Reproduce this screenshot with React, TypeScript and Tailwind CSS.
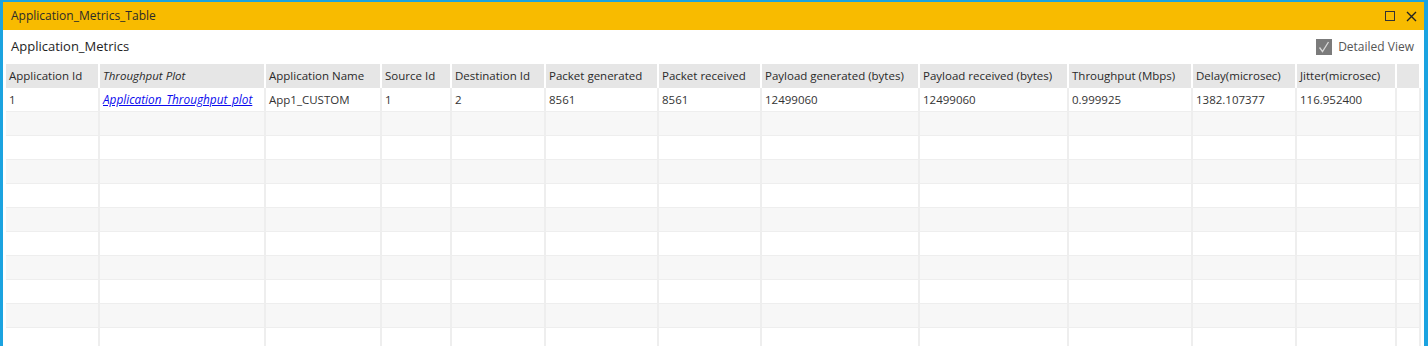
import React from 'react';

const COLS = [
  { label: 'Application Id', w: 94 },
  { label: 'Throughput Plot', w: 166, italic: true },
  { label: 'Application Name', w: 116 },
  { label: 'Source Id', w: 70 },
  { label: 'Destination Id', w: 94 },
  { label: 'Packet generated', w: 113 },
  { label: 'Packet received', w: 103 },
  { label: 'Payload generated (bytes)', w: 158 },
  { label: 'Payload received (bytes)', w: 149 },
  { label: 'Throughput (Mbps)', w: 124 },
  { label: 'Delay(microsec)', w: 104 },
  { label: 'Jitter(microsec)', w: 100 },
  { label: '', w: 24 },
];

const ROW = ['1', 'Application_Throughput_plot', 'App1_CUSTOM', '1', '2', '8561', '8561', '12499060', '12499060', '0.999925', '1382.107377', '116.952400', ''];

const EMPTY_ROWS = 10;

const App: React.FC = () => {
  return (
    <div
      className="w-[1428px] h-[346px] overflow-hidden bg-white border-l-[3px] border-r-[4px] border-t-[2px] border-[#1ba3e0] text-[#333]"
      style={{ fontFamily: '"Open Sans", "Noto Sans", sans-serif' }}
    >
      {/* Title bar */}
      <div className="h-[28px] bg-[#f8bb00] flex items-center justify-between pl-[8px] pr-[7px]">
        <span className="text-[12px] text-[#2b2b2b]">Application_Metrics_Table</span>
        <div className="flex items-center gap-[11px]">
          <svg width="10" height="10" viewBox="0 0 10 10">
            <rect x="0.5" y="0.5" width="9" height="9" fill="none" stroke="#333" strokeWidth="1" />
          </svg>
          <svg width="11" height="11" viewBox="0 0 11 11">
            <path d="M1 1L10 10M10 1L1 10" stroke="#222" strokeWidth="1.4" />
          </svg>
        </div>
      </div>

      {/* Content */}
      <div className="px-[3px]">
        <div className="h-[34px] flex items-center justify-between pl-[5px] pr-[7px]">
          <span className="text-[13px] text-[#1e1e1e]">Application_Metrics</span>
          <label className="flex items-center gap-[6px] text-[12px] text-[#555]">
            <span className="w-[16px] h-[16px] bg-[#7b7b7b] flex items-center justify-center">
              <svg width="12" height="12" viewBox="0 0 12 12">
                <path d="M1.5 6.5L4.5 10.5L10.5 1" fill="none" stroke="#d8d8d8" strokeWidth="1.3" />
              </svg>
            </span>
            Detailed View
          </label>
        </div>

        <div className="grid grid-cols-[94px_166px_116px_70px_94px_113px_103px_158px_149px_124px_104px_100px_24px] text-[11.5px]">
          {/* Header */}
          {COLS.map((c, i) => (
            <div
              key={'h' + i}
              className={`h-[24px] bg-[#e6e6e6] border-r-2 border-white flex items-center pl-[3px] whitespace-nowrap overflow-hidden text-[#2a2a2a] ${c.italic ? 'italic' : ''}`}
            >
              {c.label}
            </div>
          ))}

          {/* Data row */}
          {ROW.map((v, i) => (
            <div
              key={'r' + i}
              className="h-[24px] bg-white border-r-2 border-b border-[#eeeeee] flex items-center pl-[3px] whitespace-nowrap overflow-hidden text-[#333]"
            >
              {i === 1 ? (
                <span className="italic underline text-[11.8px] text-[#0a0aee]">{v}</span>
              ) : (
                v
              )}
            </div>
          ))}

          {/* Empty rows */}
          {Array.from({ length: EMPTY_ROWS }).map((_, r) =>
            COLS.map((c, i) => (
              <div
                key={`e${r}-${i}`}
                className={`h-[24px] border-r-2 border-b border-[#eeeeee] ${r % 2 === 0 ? 'bg-[#f7f7f7]' : 'bg-white'}`}
              />
            ))
          )}
        </div>
      </div>
    </div>
  );
};

export default App;
